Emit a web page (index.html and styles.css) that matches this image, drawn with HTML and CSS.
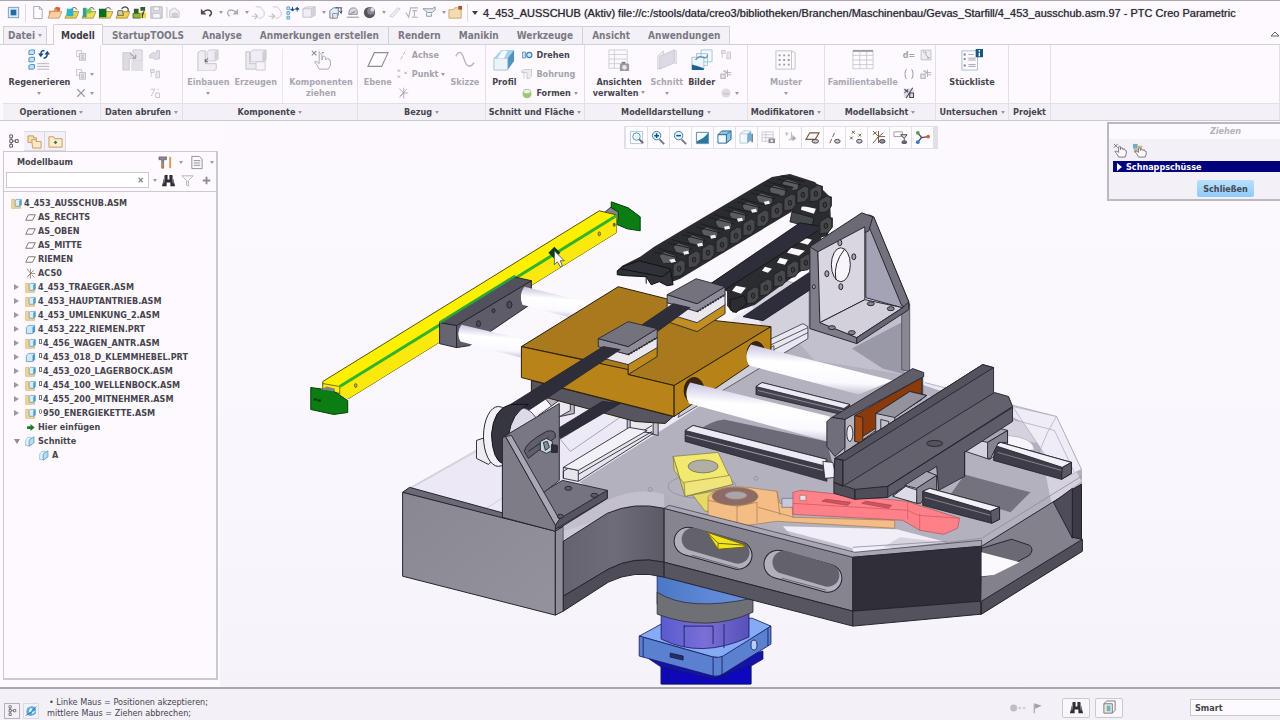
FILE: index.html
```
<!DOCTYPE html>
<html lang="de">

<head>
    <meta charset="UTF-8">
    <meta name="viewport" content="width=device-width, initial-scale=1.0">
    <title>4_453_AUSSCHUB (Aktiv) - PTC Creo Parametric</title>
    <link rel="stylesheet" href="styles.css">
</head>

<body>
    <!-- icon set -->
    <svg class="defs" aria-hidden="true">
        <symbol id="i-app" viewBox="0 0 16 16"><rect x="2.500" y="2.500" width="11" height="11" fill="#dfeaf4" stroke="#7da0bd" /><rect x="5" y="5" width="6" height="6" fill="#1d6ea8" /></symbol>
        <symbol id="i-new" viewBox="0 0 16 16"><path d="M4 1.500h6l3 3v10H4z" fill="#fdfcff" stroke="#aaa7b2" /><path d="M10 1.500v3h3" fill="none" stroke="#aaa7b2" /></symbol>
        <symbol id="i-open" viewBox="0 0 16 16"><path d="M2 6h5l1-2h5v9H2z" fill="#e0a066" /><path d="M1 14l3-7h12l-3 7z" fill="#f7d0a4" stroke="#b98657" stroke-width=".7" /><path d="M7 5q3-5 6-2l1-1v4h-4l1-1q-2-2-4 0z" fill="#e25c3f" /></symbol>
        <symbol id="i-open1" viewBox="0 0 16 16"><path d="M1 14l3-7h12l-3 7z" fill="#f3cf4d" stroke="#8f8a50" stroke-width=".8" /><path d="M3 4h7v8H3z" fill="#25b6c9" /><path d="M8 4q4-3 6 1" fill="none" stroke="#555" /></symbol>
        <symbol id="i-open2" viewBox="0 0 16 16"><path d="M1 14l3-7h12l-3 7z" fill="#f3df4d" stroke="#8f8a50" stroke-width=".8" /><path d="M2 3h4v10H2z" fill="#3f9a8f" /><path d="M6 4h5v5H6z" fill="#6ccf60" /><path d="M9 4q3-3 5 1" fill="none" stroke="#555" /></symbol>
        <symbol id="i-open3" viewBox="0 0 16 16"><path d="M1 14l3-7h12l-3 7z" fill="#f3d74d" stroke="#8f8a50" stroke-width=".8" /><path d="M1 4h8v9H1z" fill="#0f6b1f" /><path d="M8 4q4-3 6 1" fill="none" stroke="#555" /></symbol>
        <symbol id="i-open4" viewBox="0 0 16 16"><path d="M1 14l3-7h12l-3 7z" fill="#f3cf4d" stroke="#8f8a50" stroke-width=".8" /><path d="M3 6h5l1 5H3z" fill="#d8d0a0" stroke="#6d6844" /><path d="M7 4q4-4 7 0v3" fill="none" stroke="#444" stroke-width="1.300" /></symbol>
        <symbol id="i-open5" viewBox="0 0 16 16"><path d="M2 4h5v5H2zM9 2h5v4H9z" fill="#2f5f22" /><path d="M1 9h8v5H1z" fill="#8dbb2a" stroke="#444" stroke-width=".7" /><path d="M9 8h6v6H9z" fill="#f0d836" /><path d="M11 8v6M13 6l-2 6" stroke="#333" /></symbol>
        <symbol id="i-save" viewBox="0 0 16 16"><path d="M2 2h12v12H2z" fill="#dcd9e3" stroke="#b5b2bd" /><path d="M5 2h6v4H5zM4 9h8v5H4z" fill="#f6f4fa" stroke="#b5b2bd" stroke-width=".7" /></symbol>
        <symbol id="i-prn" viewBox="0 0 16 16"><path d="M1 2v12M4 6l5-3 5 4v6H4z" fill="#efedf4" stroke="#c5c2cc" /><path d="M7 9h5v4H7z" fill="#d4d1db" stroke="#bbb8c2" stroke-width=".7" /></symbol>
        <symbol id="i-undo" viewBox="0 0 16 16"><path d="M4 8q4-4 8-2 3 3-1 6" fill="none" stroke="#4f4d57" stroke-width="1.700" /><path d="M2 4v6h6z" fill="#4f4d57" /></symbol>
        <symbol id="i-redo" viewBox="0 0 16 16"><path d="M12 8q-4-4-8-2-3 3 1 6" fill="none" stroke="#aeabb6" stroke-width="1.500" /><path d="M14 4v6H8z" fill="#aeabb6" /></symbol>
        <symbol id="i-pg" viewBox="0 0 16 16"><path d="M5 2h5l4 5v4l-3 3H8" fill="#faf8fd" stroke="#cbc8d2" /><path d="M1 12h6M4 9l3 3-3 3" fill="none" stroke="#c2bfca" stroke-width="1.300" /></symbol>
        <symbol id="i-regen" viewBox="0 0 16 16"><path d="M2 2h3v3H2zM2 7h3v3H2zM2 12h3v3H2z" fill="#bfe0f3" stroke="#4f94c4" stroke-width=".8" /><path d="M8 2v4M6 4.500l2 2 2-2zM13 3v4M11 4.500l2-2 2 2z" fill="#1c4f8a" stroke="#1c4f8a" /></symbol>
        <symbol id="i-box" viewBox="0 0 16 16"><path d="M1 4h9v9H1zM1 4l4-2h9v9l-4 2M10 4l4-2" fill="#f0eef5" stroke="#c2bfca" /><path d="M10 4l4-2v9l-4 2z" fill="#d4d1db" /></symbol>
        <symbol id="i-win" viewBox="0 0 16 16"><path d="M2 6l4-3h5v8l-4 3H2z" fill="#dff0fa" stroke="#65869f" /><path d="M5 9h5v5H5z" fill="#e8e6ee" stroke="#8f8c98" /><path d="M8 3h7M14 3v5M12 6l2 3 1-3" fill="none" stroke="#4a4852" /></symbol>
        <symbol id="i-pen" viewBox="0 0 16 16"><path d="M4 10q0-7 5-7t4 7zM2 13h13" fill="#dad7e1" stroke="#8f8c98" /><path d="M6 9l5-2" stroke="#777480" /></symbol>
        <symbol id="i-ball" viewBox="0 0 16 16"><circle cx="8" cy="8" r="6" fill="#55535d" /><circle cx="9.500" cy="6.500" r="4" fill="#8b8994" /><circle cx="11" cy="5" r="2" fill="#dddbe4" /></symbol>
        <symbol id="i-bar" viewBox="0 0 16 16"><path d="M2 12L10 3l3 1-8 9z" fill="#efedf3" stroke="#d0cdd6" /></symbol>
        <symbol id="i-root" viewBox="0 0 16 16"><path d="M1 8l3 5 2-10h8M8 6h5M10 6v7M7 13h7" fill="none" stroke="#b6b3bd" stroke-width="1.200" /></symbol>
        <symbol id="i-eyes" viewBox="0 0 16 16"><path d="M1 4h10l3-2v3l-3 3H6z" fill="#dfe9f0" stroke="#8199a8" /><path d="M5 8v4h5V9" fill="none" stroke="#8199a8" /></symbol>
        <symbol id="i-fold" viewBox="0 0 16 16"><path d="M1 5h5l1-2h7v11H1z" fill="#f3dcae" stroke="#c6a978" /><path d="M11 1h4v4h-4z" fill="#b34f35" /></symbol>
        <symbol id="i-copy" viewBox="0 0 16 16"><path d="M2 2h7v8H2z" fill="#f7f5fa" stroke="#c2bfca" /><path d="M6 6h8v9H6zM8 9h4M8 11h4M8 13h4" fill="#e7e4ed" stroke="#b5b2bd" /></symbol>
        <symbol id="i-x" viewBox="0 0 16 16"><path d="M3 3l10 10M13 3L3 13" stroke="#9b98a3" stroke-width="1.600" /></symbol>
        <symbol id="i-shape" viewBox="0 0 16 16"><path d="M1 8l5-4 3 3 1-5h4v11l-5 1-4-2H1z" fill="#e0dde6" stroke="#c2bfca" /></symbol>
        <symbol id="i-tree2" viewBox="0 0 16 16"><path d="M2 2h5v4H2zM3 6v6M10 4h4v9h-5v-4z" fill="#e9e6ee" stroke="#c2bfca" /></symbol>
        <symbol id="i-line" viewBox="0 0 16 16"><path d="M2 3h6M8 2L3 12M9 8h5v6H9zM11 3h2" fill="none" stroke="#c2bfca" stroke-width="1.200" /></symbol>
        <symbol id="i-axis" viewBox="0 0 16 16"><path d="M5 14L12 1" stroke="#aba8b3" stroke-dasharray="5 2" /></symbol>
        <symbol id="i-point" viewBox="0 0 16 16"><path d="M1 2l3 3M4 2L1 5M10 5l3 3M13 5l-3 3M1 10l3 3M4 10l-3 3" stroke="#9c99a4" /></symbol>
        <symbol id="i-csys" viewBox="0 0 16 16"><path d="M3 2l6 6-6 6M9 1v14M9 8h6M13 3L4 12" fill="none" stroke="#9c99a4" /></symbol>
        <symbol id="i-rev" viewBox="0 0 16 16"><path d="M2 4h4v8H2z" fill="#bedff2" stroke="#5d8fb0" /><circle cx="11" cy="8" r="3.500" fill="#cfeaf8" stroke="#3c83b5" stroke-width="1.500" /></symbol>
        <symbol id="i-hole" viewBox="0 0 16 16"><path d="M1 4l4-2h9v9l-3 3H8V6H1zM4 6v8" fill="#edebf2" stroke="#c2bfca" /></symbol>
        <symbol id="i-form" viewBox="0 0 16 16"><circle cx="8" cy="9" r="6" fill="#9fc873" /><ellipse cx="8" cy="6" rx="5" ry="3" fill="#eef6e2" stroke="#a9b89b" /></symbol>
        <symbol id="i-brace" viewBox="0 0 16 16"><path d="M5 2q-2 0-2 3t-1 3q1 0 1 3t2 3M11 2q2 0 2 3t1 3q-1 0-1 3t-2 3" fill="none" stroke="#8f8c98" stroke-width="1.200" /></symbol>
        <symbol id="i-pct" viewBox="0 0 16 16"><path d="M1 2h13v12H1z" fill="#dedbe4" /><path d="M2 3l5 4M7 3L2 8M13 1L4 15M9 8v6h5V8z" fill="none" stroke="#4a4852" stroke-width="1.400" /></symbol>
        <symbol id="i-chart" viewBox="0 0 16 16"><path d="M1.500 1.500h13v13h-13z" fill="#edebf1" stroke="#b5b2bd" /><path d="M4 4h4v3M7 7l5 5M9 12h4" fill="none" stroke="#9c99a4" /></symbol>
        <symbol id="i-parts" viewBox="0 0 16 16"><path d="M1 8h6v6H1zM4 4h4v4M10 2v10M8 6h7M10 9h5" fill="#e3e0e9" stroke="#a5a2ad" /></symbol>
        <symbol id="i-grey" viewBox="0 0 16 16"><circle cx="8" cy="8" r="6" fill="#dddae3" /><path d="M4 9h8" stroke="#bbb8c2" /></symbol>
        <symbol id="i-zfit" viewBox="0 0 16 16"><path d="M1.500 1.500h13v13h-13z" fill="none" stroke="#a9c6da" /><circle cx="8" cy="7" r="4" fill="#eaf5fb" stroke="#5c8fb4" /><path d="M11 10l4 4" stroke="#666470" stroke-width="2" /></symbol>
        <symbol id="i-zin" viewBox="0 0 16 16"><circle cx="6" cy="6" r="4.500" fill="#e1f2fb" stroke="#3577a8" /><path d="M3.500 6h5M6 3.500v5" stroke="#174e86" stroke-width="1.600" /><path d="M9 10l5 5" stroke="#77747f" stroke-width="2" /></symbol>
        <symbol id="i-zout" viewBox="0 0 16 16"><circle cx="6" cy="6" r="4.500" fill="#e1f2fb" stroke="#3577a8" /><path d="M3.500 6h5" stroke="#174e86" stroke-width="1.600" /><path d="M9 10l5 5" stroke="#77747f" stroke-width="2" /></symbol>
        <symbol id="i-shade" viewBox="0 0 16 16"><path d="M1.500 2.500h13v12h-13z" fill="#2b77a4" /><path d="M2 3h12Q10 9 2 12z" fill="#f2fafd" /><path d="M1.500 2.500h13v12h-13z" fill="none" stroke="#6e93ab" /></symbol>
        <symbol id="i-cube" viewBox="0 0 16 16"><path d="M1 5l4-4h10v9l-5 4V5z" fill="#8cc5e4" stroke="#2e6790" /><path d="M1 5h9v9H1z" fill="#f3fafd" stroke="#2e6790" /><path d="M10 5l5-4" stroke="#2e6790" /></symbol>
        <symbol id="i-views" viewBox="0 0 16 16"><path d="M1 4l4-3h8M1 4h8v10H1z" fill="#f3f9fc" stroke="#b3ccda" /><path d="M9 4l4-3v10l-4 3z" fill="#6fb0d6" /><path d="M14 4v9" stroke="#666" stroke-width="1.500" /></symbol>
        <symbol id="i-cam" viewBox="0 0 16 16"><path d="M1 2h12v10H1zM1 5h12M1 8h12M5 2v10" fill="#fbf9fd" stroke="#d0cdd6" /><path d="M8 9h7v5H8z" fill="#8f8c98" /><circle cx="11.500" cy="11.500" r="1.500" fill="#e7e4ed" /></symbol>
        <symbol id="i-spin" viewBox="0 0 16 16"><path d="M4 2v4M2 4h4M9 2v9M6 11l3-2 5 0" fill="none" stroke="#c2bfca" stroke-width="1.200" /><path d="M10 5l4 4-4 3z" fill="#aaa7b2" /></symbol>
        <symbol id="i-pdisp" viewBox="0 0 16 16"><path d="M5 3h10l-4 7H1z" fill="#fdfbff" stroke="#79573d" stroke-width="1.200" /><ellipse cx="11" cy="12" rx="3.500" ry="2" fill="#c9c6d0" stroke="#46444e" /></symbol>
        <symbol id="i-adisp" viewBox="0 0 16 16"><path d="M3 14L9 1" stroke="#79573d" stroke-dasharray="5 2" /><ellipse cx="11" cy="12" rx="3" ry="2" fill="#c9c6d0" stroke="#46444e" /></symbol>
        <symbol id="i-ptdisp" viewBox="0 0 16 16"><path d="M3 1l3 3M6 1L3 4M1 7l3 3M4 7l-3 3M10 4l3 3M13 4l-3 3" stroke="#79573d" /><ellipse cx="11" cy="12" rx="3" ry="2" fill="#c9c6d0" stroke="#46444e" /></symbol>
        <symbol id="i-cdisp" viewBox="0 0 16 16"><path d="M2 1l6 6-6 7M8 1v13M8 7h7M13 3L6 9M2 5l4-3" fill="none" stroke="#79573d" /><ellipse cx="12" cy="12" rx="3" ry="2" fill="#8f8c98" stroke="#46444e" /></symbol>
        <symbol id="i-ann" viewBox="0 0 16 16"><path d="M1 2h9v5H1z" fill="#fff" stroke="#b39290" /><path d="M8 5h7l-3 4zM12 9v3" fill="#d9d6df" stroke="#46444e" /><ellipse cx="12" cy="13" rx="3" ry="2" fill="#66646e" /></symbol>
        <symbol id="i-rgb" viewBox="0 0 16 16"><path d="M3 3l4 5 7-1M7 8l-4 5" fill="none" stroke="#4a4852" stroke-width="1.300" /><circle cx="3" cy="3" r="2" fill="#4b9a5c" /><circle cx="14" cy="7" r="2" fill="#d45a50" /><circle cx="3" cy="13" r="2" fill="#3c79c2" /></symbol>
        <symbol id="i-hand" viewBox="0 0 16 16"><path d="M1 1l4 4M5 1L1 5" stroke="#77747f" /><path d="M6 15q-2-4-4-6 2-1 4 1V4q1.500-1 2 0v3l1-2q1.500 0 1.500 2l1.500-1 1 2 1 0q1 2-1 7z" fill="#faf8fc" stroke="#77747f" /></symbol>
        <symbol id="i-hand2" viewBox="0 0 16 16"><path d="M1 1h5v5H1z" fill="#6fa9d4" /><path d="M6 3h5v4H6zM2 6h4v4H2z" fill="#d6b077" /><path d="M7 15q-2-4-4-6 2-1 4 1V6q1.500-1 2 0v2l1-1q1.500 0 1.500 1l1.500-1 1 2 1 0q1 2-1 6z" fill="#faf8fc" stroke="#77747f" /></symbol>
        <symbol id="i-mtree" viewBox="0 0 16 16"><path d="M4 1h3v3H4zM4 6h3v3H4zM4 11h3v3H4zM5.500 4v2M5.500 9v2M7 7.500h3M10 6h3v3h-3z" fill="#fff" stroke="#5a5862" /></symbol>
        <symbol id="i-folders" viewBox="0 0 16 16"><path d="M1 2h6v2h3v5H1z" fill="#f5dfae" stroke="#c79a5d" /><path d="M5 6h4l1 2h5v7H6z" fill="#fbeac4" stroke="#c79a5d" /></symbol>
        <symbol id="i-fav" viewBox="0 0 16 16"><path d="M1 3h5l1 2h8v9H1z" fill="#fbeccb" stroke="#c79a5d" /><path d="M8 7l2 2-2 2-2-2z" fill="#3e7a55" /></symbol>
        <symbol id="i-tools" viewBox="0 0 16 16"><path d="M1 2h8v3H6v9H4V5H1z" fill="#8f8c98" stroke="#55535d" stroke-width=".7" /><path d="M4 8h2v6H4z" fill="#c28648" /><path d="M12 2h2v12h-2z" fill="#d99a51" /></symbol>
        <symbol id="i-doc" viewBox="0 0 16 16"><path d="M3 1.500h8l3 3v10H3zM5 6h7M5 8.500h7M5 11h7" fill="#fbf9fd" stroke="#8f8c98" /></symbol>
        <symbol id="i-bino" viewBox="0 0 16 16"><path d="M4 2h3v5h2V2h3l3 12h-5v-4H6v4H1z" fill="#2e2c35" /><path d="M4 4l-1 7M12 4l1 7" stroke="#98959f" /></symbol>
        <symbol id="i-funnel" viewBox="0 0 16 16"><path d="M2 3h12L9 8v6l-2-1V8z" fill="#fbf9fd" stroke="#b5b2bd" /></symbol>
        <symbol id="i-plus" viewBox="0 0 16 16"><path d="M8 4v8M4 8h8" stroke="#8f8c98" stroke-width="2" /></symbol>
        <symbol id="i-asm" viewBox="0 0 16 16"><path d="M1 2h5v8h8v5H1z" fill="#f6d493" stroke="#c9a363" stroke-width=".8" /><path d="M6 4l2-2h7v8l-2 2H6z" fill="#d5effb" stroke="#4b8bb5" stroke-width=".9" /><path d="M12 4l3-2v8l-3 2z" fill="#4c9dce" /></symbol>
        <symbol id="i-prt" viewBox="0 0 16 16"><path d="M2 5l3-3h9v9l-3 3H2z" fill="#cdeafa" stroke="#4b8bb5" /><path d="M11 5l3-3v9l-3 3z" fill="#3f92c6" /></symbol>
        <symbol id="i-plane" viewBox="0 0 16 16"><path d="M5 4h10l-4 8H1z" fill="#fefcff" stroke="#6b625f" stroke-width="1.200" /></symbol>
        <symbol id="i-acs" viewBox="0 0 16 16"><path d="M3 1l5 7-5 6M8 1v14M8 8h7M13 3L4 12M10 10l4 4" fill="none" stroke="#86684f" /></symbol>
        <symbol id="i-ins" viewBox="0 0 16 16"><path d="M3 6h5V3l6 5-6 5v-3H3z" fill="#1f7a28" /></symbol>
        <symbol id="i-sec" viewBox="0 0 16 16"><path d="M1 6l3-4h5v8l-3 4H1z" fill="#e4f2f9" stroke="#8bb3cc" /><path d="M6 6l7-5v9l-7 5z" fill="#b4dcf2" stroke="#4b8bb5" /></symbol>
        <symbol id="i-globe" viewBox="0 0 16 16"><path d="M3 4q6-4 10-1l2 3q-2 2 0 5-5 5-10 3-5-2-2-10z" fill="#5fa9dc" /><path d="M6 5q2-2 4 0l-2 4-3 1zM9 9l4-1q0 3-3 4z" fill="#d7effb" /><path d="M1 14Q9 11 15 2" fill="none" stroke="#235f94" /></symbol>
        <symbol id="i-flag" viewBox="0 0 16 16"><path d="M3 2v13" stroke="#a5a2ad" stroke-width="1.500" /><path d="M4 2l9 3-9 4z" fill="#a5a2ad" /></symbol>
        <symbol id="i-dots" viewBox="0 0 20 16"><circle cx="5" cy="8" r="4" fill="#c0bdc8" /><circle cx="12" cy="8" r="1.500" fill="#d0cdd6" /><circle cx="17" cy="8" r="1.500" fill="#d0cdd6" /></symbol>
        <symbol id="i-sel" viewBox="0 0 16 16"><path d="M2 4h9v10H2z" fill="#eee9d2" stroke="#777480" /><path d="M2 4l3-3h9v10l-3 3" fill="none" stroke="#777480" /><path d="M5 6h4v6H5z" fill="#6cb1d8" /></symbol>
        <!-- large ribbon icons -->
        <symbol id="b-regen" viewBox="0 0 24 24"><path d="M1 2l2-1h4v4l-1 1H1zM1 10l2-1h4v4l-1 1H1zM1 18l2-1h4v4l-1 1H1z" fill="#bfe2f4" stroke="#3f8abb" /><path d="M10 16h13M10 19h13M10 22h13" stroke="#b0adb8" /><path d="M18 2q-4-1-4 4M17 10q4 0 4-5" fill="none" stroke="#1c4f7d" stroke-width="1.600" /><path d="M11 5h6l-3 4zM18 6h6l-3-4z" fill="#1c4f7d" /></symbol>
        <symbol id="b-get" viewBox="0 0 24 24"><path d="M1 4h9v7H8v12H1z" fill="#dddae3" stroke="#cbc8d2" /><path d="M12 1h10v12H12z" fill="#e7e4ed" stroke="#cbc8d2" /><path d="M10 13h13v11H10z" fill="#e2dfe9" /><path d="M9 5l6 5M15 6v4h-4" fill="none" stroke="#8f8c98" /></symbol>
        <symbol id="b-asm" viewBox="0 0 24 24"><path d="M1 4l3-2h5v14h12v6l-3 2H1z" fill="#f0eef4" stroke="#c2bfca" /><path d="M11 3l3-2h9v10l-3 2h-9z" fill="#efedf3" stroke="#cbc8d2" /><path d="M19 3l4-2v10l-4 2z" fill="#d4d1db" /><path d="M12 10l-3 4M9 11v3h3" fill="none" stroke="#55535d" /></symbol>
        <symbol id="b-create" viewBox="0 0 24 24"><path d="M1 3h4v13h12v6H1z" fill="#eceaf1" stroke="#c2bfca" /><path d="M6 3l3-2h14v10l-3 3H6z" fill="#efedf3" stroke="#cbc8d2" /><path d="M19 3l4-2v12l-4 1z" fill="#d0cdd6" /><path d="M12 14h10v9H12z" fill="#f6f4f9" stroke="#cbc8d2" /></symbol>
        <symbol id="b-hand" viewBox="0 0 24 24"><path d="M2 2l5 5M7 2L2 7M10 3v2M13 4h2" stroke="#8f8c98" stroke-width="1.200" /><path d="M10 22q-2-5-5-8 2-2 5 2V6q2-2 3 0v6l1-4q2-1 3 1v3l2-2q2 0 2 2l1 0q2 6-2 10z" fill="#faf8fc" stroke="#a8a5b0" /></symbol>
        <symbol id="b-plane" viewBox="0 0 24 24"><path d="M8 4h15l-7 15H1z" fill="#fefcff" stroke="#8f8c98" stroke-width="1.200" /></symbol>
        <symbol id="b-sketch" viewBox="0 0 24 24"><path d="M2 8q5-10 9 3t11 4" fill="none" stroke="#b5b2bd" stroke-width="1.500" /></symbol>
        <symbol id="b-prof" viewBox="0 0 24 24"><path d="M1 10L9 1h14l-7 9z" fill="#a4d3ec" /><path d="M23 1v12l-7 10V10z" fill="#4d94c2" /><path d="M1 10h15v13H1z" fill="#eaf4fa" stroke="#aebfcb" /><path d="M5 10l5-8h6l-4 8z" fill="#f5fbfe" /></symbol>
        <symbol id="b-views" viewBox="0 0 24 24"><path d="M1 1h20v20H1zM1 6h20M1 11h20M1 16h20M7 1v20" fill="#fbf9fd" stroke="#d0cdd6" /><path d="M13 16h10v8H13z" fill="#9c99a4" /><path d="M15 14h4v2h-4z" fill="#77747f" /><circle cx="18" cy="20" r="2.500" fill="#e7e4ed" /></symbol>
        <symbol id="b-cut" viewBox="0 0 24 24"><path d="M2 8l6-6v14l-6 6z" fill="#f5f3f8" stroke="#cbc8d2" /><path d="M4 8l16-7v14L4 22z" fill="#dddae3" stroke="#cbc8d2" /><path d="M20 1l2 1v14l-2-1z" fill="#f5f3f8" stroke="#cbc8d2" /></symbol>
        <symbol id="b-img" viewBox="0 0 24 24"><path d="M11 1h12v13H11zM6 5h12v13H6z" fill="#f3f8fb" stroke="#a2c4da" /><path d="M1 9h13v13H1z" fill="#eef6fb" stroke="#a2c4da" /><path d="M1 17q5 1 13 4v2H1z" fill="#1f5f92" /><path d="M5 12q3-5 8-3t5-3" fill="none" stroke="#6d98b4" stroke-width="1.500" /></symbol>
        <symbol id="b-pat" viewBox="0 0 24 24"><path d="M1 2h17v20H1zM18 2l4 2v18h-4" fill="#fbf9fd" stroke="#c2bfca" /><path d="M4 6h2v2H4zM9 6h2v2H9zM14 6h2v2h-2zM4 11h2v2H4zM9 11h2v2H9zM14 11h2v2h-2zM4 16h2v2H4zM9 16h2v2H9zM14 16h2v2h-2z" fill="#9c99a4" /></symbol>
        <symbol id="b-fam" viewBox="0 0 24 24"><path d="M1 2.500h22v19H1zM1 7h22M1 12h22M1 17h22M8.500 3v18M16 3v18" fill="#fdfbff" stroke="#cbc8d2" /><path d="M1 2h22" stroke="#9c99a4" stroke-width="2" /></symbol>
        <symbol id="b-bom" viewBox="0 0 24 24"><path d="M1 2h17v21H1z" fill="#fbf9fd" stroke="#a2c0d4" /><path d="M8 6h6M8 10h8M8 12h8M8 17h8M8 19h8" stroke="#a5a2ad" /><path d="M3 5h2v2H3zM3 10h2v2H3zM3 17h2v2H3z" fill="#77747f" /><path d="M16 0h8v9h-8z" fill="#16567f" /><path d="M20 1v2M20 4v4" stroke="#fff" stroke-width="1.500" /></symbol>
    </svg>

    <header class="titlebar">
        <svg class="ico"><use href="#i-app" /></svg>
        <span class="vsep"></span>
        <button class="qat" aria-label="Neu"><svg class="ico"><use href="#i-new" /></svg></button>
        <button class="qat" aria-label="Öffnen"><svg class="ico"><use href="#i-open" /></svg></button>
        <button class="qat" aria-label="Teil öffnen"><svg class="ico"><use href="#i-open1" /></svg></button>
        <button class="qat" aria-label="Baugruppe öffnen"><svg class="ico"><use href="#i-open2" /></svg></button>
        <button class="qat" aria-label="Zeichnung öffnen"><svg class="ico"><use href="#i-open3" /></svg></button>
        <button class="qat" aria-label="Bibliothek öffnen"><svg class="ico"><use href="#i-open4" /></svg></button>
        <button class="qat" aria-label="Normteil öffnen"><svg class="ico"><use href="#i-open5" /></svg></button>
        <button class="qat" aria-label="Speichern"><svg class="ico"><use href="#i-save" /></svg></button>
        <button class="qat" aria-label="Sichern"><svg class="ico"><use href="#i-prn" /></svg></button>
        <span class="qat-space"></span>
        <button class="qat" aria-label="Rückgängig"><svg class="ico"><use href="#i-undo" /></svg><i class="caret"></i></button>
        <button class="qat" aria-label="Wiederholen"><svg class="ico"><use href="#i-redo" /></svg><i class="caret"></i></button>
        <button class="qat" aria-label="Zurück"><svg class="ico"><use href="#i-pg" /></svg></button>
        <button class="qat" aria-label="Vor"><svg class="ico"><use href="#i-pg" /></svg></button>
        <button class="qat" aria-label="Regenerieren"><svg class="ico"><use href="#i-regen" /></svg></button>
        <button class="qat" aria-label="Fenster"><svg class="ico"><use href="#i-box" /></svg><i class="caret"></i></button>
        <button class="qat" aria-label="Aktivieren"><svg class="ico"><use href="#i-win" /></svg></button>
        <button class="qat" aria-label="Messen"><svg class="ico"><use href="#i-pen" /></svg></button>
        <button class="qat" aria-label="Farbeffekte"><svg class="ico"><use href="#i-ball" /></svg><i class="caret"></i></button>
        <button class="qat" aria-label="Lineal"><svg class="ico"><use href="#i-bar" /></svg></button>
        <button class="qat" aria-label="Parameter"><svg class="ico"><use href="#i-root" /></svg></button>
        <button class="qat" aria-label="Sichtbarkeit"><svg class="ico"><use href="#i-eyes" /></svg><i class="caret"></i></button>
        <button class="qat" aria-label="Arbeitsverzeichnis"><svg class="ico"><use href="#i-fold" /></svg></button>
        <span class="vsep"></span>
        <i class="caret dark"></i>
        <h1 class="title">4_453_AUSSCHUB (Aktiv) file://c:/stools/data/creo3/bibliotheken/Branchen/Maschinenbau/Gevas_Starfill/4_453_ausschub.asm.97 - PTC Creo Parametric</h1>
    </header>

    <nav class="tabs">
        <button class="tab file">Datei<i class="caret"></i></button>
        <a class="tab active" href="#modell">Modell</a>
        <a class="tab" href="#startup">StartupTOOLS</a>
        <a class="tab" href="#analyse">Analyse</a>
        <a class="tab" href="#anmerkungen">Anmerkungen erstellen</a>
        <a class="tab split" href="#rendern">Rendern</a>
        <a class="tab" href="#manikin">Manikin</a>
        <a class="tab" href="#werkzeuge">Werkzeuge</a>
        <a class="tab split" href="#ansicht">Ansicht</a>
        <a class="tab last" href="#anwendungen">Anwendungen</a>
        <button class="collapse" aria-label="Multifunktionsleiste minimieren"><svg class="up" viewBox="0 0 10 8"><path d="M1 6l4-4 4 4z" fill="#fff" stroke="#66646e" /></svg></button>
    </nav>

    <section class="ribbon">
        <div class="group g-op">
            <div class="tools">
                <button class="big on"><svg><use href="#b-regen" /></svg>Regenerieren<i class="caret"></i></button>
                <div class="stack">
                    <button class="small" aria-label="Kopieren"><svg><use href="#i-copy" /></svg></button>
                    <button class="small" aria-label="Einfügen"><svg><use href="#i-copy" /></svg><i class="caret"></i></button>
                    <button class="small" aria-label="Löschen"><svg><use href="#i-x" /></svg><i class="caret"></i></button>
                </div>
            </div>
            <button class="name">Operationen<i class="caret"></i></button>
        </div>
        <div class="group g-get">
            <div class="tools">
                <button class="big" aria-label="Daten abrufen"><svg><use href="#b-get" /></svg></button>
                <div class="stack">
                    <button class="small" aria-label="Importieren"><svg><use href="#i-shape" /></svg></button>
                    <button class="small" aria-label="Verschmelzen"><svg><use href="#i-tree2" /></svg></button>
                    <button class="small" aria-label="Schrumpfverpackung"><svg><use href="#i-line" /></svg></button>
                </div>
            </div>
            <button class="name">Daten abrufen<i class="caret"></i></button>
        </div>
        <div class="group g-comp">
            <div class="tools">
                <button class="big"><svg><use href="#b-asm" /></svg>Einbauen<i class="caret"></i></button>
                <button class="big"><svg><use href="#b-create" /></svg>Erzeugen</button>
                <button class="big lined"><svg><use href="#b-hand" /></svg>Komponenten<br>ziehen</button>
            </div>
            <button class="name">Komponente<i class="caret"></i></button>
        </div>
        <div class="group g-datum">
            <div class="tools">
                <button class="big"><svg><use href="#b-plane" /></svg>Ebene</button>
                <div class="stack">
                    <button class="small"><svg><use href="#i-axis" /></svg>Achse</button>
                    <button class="small"><svg><use href="#i-point" /></svg>Punkt<i class="caret"></i></button>
                    <button class="small" aria-label="Koordinatensystem"><svg><use href="#i-csys" /></svg></button>
                </div>
                <button class="big"><svg><use href="#b-sketch" /></svg>Skizze</button>
            </div>
            <button class="name">Bezug<i class="caret"></i></button>
        </div>
        <div class="group g-cut">
            <div class="tools">
                <button class="big on"><svg><use href="#b-prof" /></svg>Profil</button>
                <div class="stack">
                    <button class="small on"><svg><use href="#i-rev" /></svg>Drehen</button>
                    <button class="small"><svg><use href="#i-hole" /></svg>Bohrung</button>
                    <button class="small on"><svg><use href="#i-form" /></svg>Formen<i class="caret"></i></button>
                </div>
            </div>
            <button class="name">Schnitt und Fläche<i class="caret"></i></button>
        </div>
        <div class="group g-disp">
            <div class="tools">
                <button class="big on"><svg><use href="#b-views" /></svg><span>Ansichten<br>verwalten<i class="caret"></i></span></button>
                <button class="big"><svg><use href="#b-cut" /></svg>Schnitt<i class="caret"></i></button>
                <button class="big on"><svg><use href="#b-img" /></svg>Bilder</button>
                <div class="stack">
                    <button class="small" aria-label="Explosionsansicht"><svg><use href="#i-tree2" /></svg></button>
                    <button class="small" aria-label="Status umschalten"><svg><use href="#i-parts" /></svg></button>
                    <button class="small" aria-label="Darstellungsstil"><svg><use href="#i-grey" /></svg><i class="caret"></i></button>
                </div>
            </div>
            <button class="name">Modelldarstellung<i class="caret"></i></button>
        </div>
        <div class="group g-mod">
            <div class="tools">
                <button class="big"><svg><use href="#b-pat" /></svg>Muster<i class="caret"></i></button>
            </div>
            <button class="name">Modifikatoren<i class="caret"></i></button>
        </div>
        <div class="group g-int">
            <div class="tools">
                <button class="big"><svg><use href="#b-fam" /></svg>Familientabelle</button>
                <div class="stack">
                    <button class="small" aria-label="Beziehungen">d=</button>
                    <button class="small" aria-label="Parameter"><svg><use href="#i-brace" /></svg></button>
                    <button class="small" aria-label="Bemaßungen umschalten"><svg><use href="#i-pct" /></svg></button>
                </div>
                <div class="stack">
                    <button class="small" aria-label="Publizieren"><svg><use href="#i-chart" /></svg></button>
                    <button class="small" aria-label="Komponentenschnittstelle"><svg><use href="#i-parts" /></svg></button>
                </div>
            </div>
            <button class="name">Modellabsicht<i class="caret"></i></button>
        </div>
        <div class="group g-inv">
            <div class="tools">
                <button class="big on"><svg><use href="#b-bom" /></svg>Stückliste</button>
            </div>
            <button class="name">Untersuchen<i class="caret"></i></button>
        </div>
        <div class="group g-proj">
            <div class="tools"></div>
            <button class="name">Projekt</button>
        </div>
        <div class="group rest">
            <div class="tools"></div>
            <div class="name"></div>
        </div>
    </section>

    <main class="work">
        <aside class="side">
            <div class="side-tabs">
                <button class="side-tab open" aria-label="Modellbaum"><svg class="ico"><use href="#i-mtree" /></svg></button>
                <button class="side-tab" aria-label="Ordner-Browser"><svg class="ico"><use href="#i-folders" /></svg></button>
                <button class="side-tab" aria-label="Favoriten"><svg class="ico"><use href="#i-fav" /></svg></button>
            </div>
            <div class="panel">
                <div class="panel-head">
                    <h2>Modellbaum</h2>
                    <button aria-label="Einstellungen"><svg class="ico"><use href="#i-tools" /></svg><i class="caret"></i></button>
                    <button aria-label="Anzeigen"><svg class="ico"><use href="#i-doc" /></svg><i class="caret"></i></button>
                </div>
                <div class="search">
                    <div class="field">
                        <input type="text" aria-label="Im Modellbaum suchen">
                        <button aria-label="Leeren">×</button>
                    </div>
                    <i class="caret"></i>
                    <button aria-label="Suchen"><svg class="ico"><use href="#i-bino" /></svg></button>
                    <button aria-label="Filter"><svg class="ico"><use href="#i-funnel" /></svg></button>
                    <button aria-label="Hinzufügen"><svg class="ico"><use href="#i-plus" /></svg></button>
                </div>
                <ul class="tree">
                    <li class="root"><svg><use href="#i-asm" /></svg>4_453_AUSSCHUB.ASM</li>
                    <li><i class="tw"></i><svg><use href="#i-plane" /></svg>AS_RECHTS</li>
                    <li><i class="tw"></i><svg><use href="#i-plane" /></svg>AS_OBEN</li>
                    <li><i class="tw"></i><svg><use href="#i-plane" /></svg>AS_MITTE</li>
                    <li><i class="tw"></i><svg><use href="#i-plane" /></svg>RIEMEN</li>
                    <li><i class="tw"></i><svg><use href="#i-acs" /></svg>ACS0</li>
                    <li><i class="tw closed"></i><svg><use href="#i-asm" /></svg>4_453_TRAEGER.ASM</li>
                    <li><i class="tw closed"></i><svg><use href="#i-asm" /></svg>4_453_HAUPTANTRIEB.ASM</li>
                    <li><i class="tw closed"></i><svg><use href="#i-asm" /></svg>4_453_UMLENKUNG_2.ASM</li>
                    <li><i class="tw closed"></i><svg><use href="#i-prt" /></svg>4_453_222_RIEMEN.PRT</li>
                    <li><i class="tw closed"></i><svg><use href="#i-asm" /></svg><b class="mark"></b>4_456_WAGEN_ANTR.ASM</li>
                    <li><i class="tw closed"></i><svg><use href="#i-prt" /></svg><b class="mark"></b>4_453_018_D_KLEMMHEBEL.PRT</li>
                    <li><i class="tw closed"></i><svg><use href="#i-asm" /></svg><b class="mark"></b>4_453_020_LAGERBOCK.ASM</li>
                    <li><i class="tw closed"></i><svg><use href="#i-asm" /></svg><b class="mark"></b>4_454_100_WELLENBOCK.ASM</li>
                    <li><i class="tw closed"></i><svg><use href="#i-asm" /></svg><b class="mark"></b>4_455_200_MITNEHMER.ASM</li>
                    <li><i class="tw closed"></i><svg><use href="#i-asm" /></svg><b class="mark flex"></b>950_ENERGIEKETTE.ASM</li>
                    <li><i class="tw"></i><svg><use href="#i-ins" /></svg>Hier einfügen</li>
                    <li><i class="tw opened"></i><svg><use href="#i-sec" /></svg>Schnitte</li>
                    <li class="deep"><i class="tw"></i><svg><use href="#i-sec" /></svg>A</li>
                </ul>
            </div>
        </aside>

        <section class="view">
            <svg class="scene" viewBox="220 121 1060 567" role="img" aria-label="Baugruppe 4_453_AUSSCHUB">
                <defs>
                    <linearGradient id="bg" x1="0" y1="0" x2="0" y2="1">
                        <stop offset="0" stop-color="#fdf9ff" />
                        <stop offset=".55" stop-color="#faf6fd" />
                        <stop offset="1" stop-color="#f2eef7" />
                    </linearGradient>
                    <linearGradient id="rod" x1="0" y1="0" x2="-.15" y2="1">
                        <stop offset="0" stop-color="#c9c5e0" />
                        <stop offset=".3" stop-color="#ffffff" />
                        <stop offset=".65" stop-color="#fbf9ff" />
                        <stop offset="1" stop-color="#a9a5bd" />
                    </linearGradient>
                    <linearGradient id="wall" x1="0" y1="0" x2="1" y2="0">
                        <stop offset="0" stop-color="#64636f" />
                        <stop offset=".5" stop-color="#6d6c78" />
                        <stop offset="1" stop-color="#5b5a65" />
                    </linearGradient>
                    <linearGradient id="front" x1="0" y1="0" x2="1" y2="1">
                        <stop offset="0" stop-color="#898791" />
                        <stop offset="1" stop-color="#94929d" />
                    </linearGradient>
                    <linearGradient id="cyl" x1="0" y1="0" x2="1" y2="0">
                        <stop offset="0" stop-color="#4a78c4" />
                        <stop offset=".5" stop-color="#5d86d4" />
                        <stop offset="1" stop-color="#6a90e0" />
                    </linearGradient>
                    <linearGradient id="hub" x1="0" y1="0" x2="1" y2="0">
                        <stop offset="0" stop-color="#5a5bd0" />
                        <stop offset=".5" stop-color="#7a6fd6" />
                        <stop offset="1" stop-color="#5650b8" />
                    </linearGradient>
                    <g id="link">
                        <path d="M-7-3l8-6 7 2v9l-5 6-10 2z" fill="#2b2c30" />
                        <path d="M-5-3l8-5 4 2v9l-4 5-8 1z" fill="#46484c" stroke="#1d1d20" stroke-width=".8" />
                        <ellipse cx="1" cy="1" rx="1.800" ry="2.600" fill="#3a3c40" stroke="#17171a" stroke-width=".8" />
                    </g>
                    <g id="rung">
                        <path d="M-22-7l6-5 24 6-6 8z" fill="#2b2c30" />
                        <path d="M-17-4l5-4 12 4-1 7-12 1z" fill="#5a5c61" stroke="#1d1d20" stroke-width=".8" />
                        <path d="M-22-8L2-2M-18-11L6-5" stroke="#1d1d20" />
                    </g>
                </defs>
                <rect x="0" y="0" width="1500" height="900" fill="url(#bg)" />

                <!-- gearbox and motor under the base -->
                <g stroke="#12185a" stroke-width=".8" stroke-linejoin="round">
                    <path d="M649 660l12 8v17h90v-18l12-7v-8l-50 14-64-14z" fill="#1412a8" />
                    <path d="M661 668l52 12 38-14v19h-90z" fill="#0d08c0" />
                    <path d="M668 671v14M676 672v13M700 678v7M726 677v8" />
                    <path d="M639 637l22-12 91-6 19 8-45 30q-6 3-13 1z" fill="#86aaf3" />
                    <path d="M639 637l74 21q6 1 10-1l48-30v18l-48 30q-5 3-10 2l-74-20z" fill="#5a80cf" />
                    <path d="M643 639v19M713 658v19M722 658v18M768 629v18" fill="none" />
                    <path d="M661 612v28q40 20 88-2v-28z" fill="url(#hub)" />
                    <path d="M684 626v22M684 627h29v18M724 625v24" fill="none" />
                    <path d="M657 575v30q40 15 96-4v-10z" fill="url(#cyl)" />
                    <path d="M657 593q30 20 96 6v14q-45 21-96 2z" fill="#6f7075" stroke="#2d2d33" />
                    <path d="M670 654l13 3v4l-13-3z" fill="#25305c" />
                    <ellipse cx="754" cy="646" rx="3" ry="5" fill="#b7cdfb" />
                </g>

                <!-- base: transparent cover -->
                <g stroke-linejoin="round">
                    <path d="M403 492L500 437 560 400 680 360 785 280 905 305 910 380 925 383 1057 417 1082 470V486L982 548 853 558 664 509 636 494 607 502 555 532z" fill="#ece8f6" />
                    <path d="M403 492L500 437M410 489L560 405M477 515L560 460" fill="none" stroke="#c4c0d0" stroke-width=".7" />
                    <path d="M563 532l-2-12 46-22-28-15 74-47 32-20 86-56 20-36 20-28 90 10 9 75 90 30 40 20 42 40v30l-100 62-129 11-189-49-28-15-29 8z" fill="#b3b1be" />
                    <path d="M783 282l29 8v40l98-20v66l-95-15-32-35z" fill="#c6c4d0" opacity=".8" />
                    <path d="M747 296l36-15 26 5v40l-37 22" fill="#d3d1dc" stroke="#9895a3" stroke-width=".7" />
                    <path d="M852 349l53-28 0 54-22-6z" fill="#9a99a8" />
                    <path d="M902 308l8-4v68l-8-2z" fill="#8a8894" stroke="#4b4954" stroke-width=".8" />
                    <path d="M925 383l132 34 25 53v14" fill="none" stroke="#9b98a6" stroke-width=".7" />
                    <path d="M923 395l90 25 42 10 27 52-30 22-12-60-30-6z" fill="#dddae5" opacity=".8" />
                    <path d="M1013 407l44 10 25 53-20 10z" fill="#efecf6" stroke="#aaa7b5" stroke-width=".7" />
                    <path d="M1013 420l42 11 20 42M1048 433l-16 38M1048 433l9-16" fill="none" stroke="#aaa7b5" stroke-width=".7" />
                    <path d="M700 430q10-8 24-10l103 22 8 32-12 2-120-36z" fill="#6b6a76" />
                    <path d="M965 475l66 18-20 20-60-18z" fill="#73727d" />
                    <path d="M1008 436q25 2 27 14l-20 4-12-12z" fill="#f7f4fb" stroke="#a3a0ae" stroke-width=".6" />
                    <path d="M783 527l114 3 50 13-94 11-60-15z" fill="#f1eef8" />
                    <path d="M884 548l16-10 36 4 11 2-40 6z" fill="#d6d3de" />
                    <path d="M853 548l94-6M853 555l129-16 100-62" fill="none" stroke="#8f8c9a" stroke-width=".8" />
                    <path d="M770 527l83 22 0 8-189-49v-12z" fill="#b0aebb" opacity=".7" />
                    <circle cx="756" cy="479" r="2" fill="none" stroke="#8f8c9a" stroke-width=".7" />
                    <circle cx="650" cy="490" r="2" fill="none" stroke="#8f8c9a" stroke-width=".7" />
                </g>

                <!-- swing arm below the cover -->
                <g stroke="#a07a52" stroke-width=".7" stroke-linejoin="round">
                    <ellipse cx="702" cy="487" rx="34" ry="12" fill="none" stroke="#8e8b99" />
                    <path d="M673 457l45-4 15 32-48 12z" fill="#f2e96f" stroke="#7f7a3a" />
                    <path d="M673 457l1 14 31 41 15-1-2-20-33 6z" fill="#e6d964" stroke="#7f7a3a" />
                    <path d="M733 485l-48 12-1-14 46-7z" fill="#f0e57b" stroke="#7f7a3a" />
                    <ellipse cx="703" cy="467" rx="15" ry="6.500" fill="#b1afa5" stroke="#666347" />
                    <path d="M708 497q10-12 40-9l29 4 3 12 12 2 1 12 102 3v8l-118-7-37 5-32-8z" fill="#f4bd86" />
                    <path d="M708 501l29 6 20-4M757 503v20M777 492l3 24M737 507v18M758 508l36 10" fill="none" />
                    <ellipse cx="735" cy="497" rx="23" ry="9" fill="#8c6a66" />
                    <ellipse cx="736" cy="496" rx="11" ry="4" fill="#aaa4ae" />
                    <path d="M782 499h14v9h-14z" fill="#c9c8d8" stroke="#6b6a88" />
                    <path d="M793 493l8-2 106 11 53 17-2 10-14 6-24-4-17-10-110-6z" fill="#ff8089" stroke="#b65059" />
                    <path d="M793 504l115 7 10 5 42 3M908 502v18M920 514v17" fill="none" stroke="#c65862" />
                    <path d="M822 502l4-2 25 3-3 3zM862 504l4-2 26 4-3 3z" fill="#d2525d" stroke="#a5444e" />
                    <path d="M800 496h6v5h-6z" fill="#ecdfe8" />
                </g>

                <!-- base: solid walls -->
                <g stroke="#26252c" stroke-width="1" stroke-linejoin="round">
                    <path d="M402 493l7-5 146 40 8-1v15l-8-9z" fill="#6a6974" />
                    <path d="M402 493l153 39v84L402 577z" fill="url(#front)" />
                    <path d="M555 532l8-5v85l-8 4z" fill="#8f8d98" />
                    <path d="M563 527l44-26q30-14 57-6v14q-27-6-57 5l-44 28z" fill="#c5c2cf" stroke="none" opacity=".85" />
                    <path d="M563 542l44-28q27-12 57-5v54q-30-7-56 7l-45 27z" fill="url(#wall)" />
                    <path d="M563 597l45-27q26-14 56-7v15q-30-8-56 5l-45 29z" fill="#4e4d57" />
                    <path d="M664 509l189 49v54l-189-49z" fill="#86848f" />
                    <path d="M664 509l5-3 186 47 127-12v6l-129 11z" fill="#a9a7b3" stroke-width=".6" />
                    <path d="M664 563l189 49v15l-189-49z" fill="#565560" />
                    <path d="M853 558l129-11v55l-129 10z" fill="#302e39" />
                    <path d="M853 612l129-10v13l-129 12z" fill="#53525d" />
                    <path d="M982 547l100-62v67l-101 63z" fill="#83818c" />
                    <path d="M1054 503l19-14v50z" fill="#4e4c58" />
                    <path d="M1073 490l9-5v55l-9-2z" fill="#3b3a45" />
                    <path d="M982 602l101-62v12l-101 63z" fill="#4f4e59" />
                    <path d="M982 549l30-9 18 6q5 4 0 10l-37 20-11 1z" fill="#6a6974" />
                    <path d="M982 553l38 10-26 13-12 1z" fill="#fbf8fe" stroke="none" />
                </g>
                <g fill="none" stroke-linecap="round">
                    <path d="M688 542l50 14M778 565l50 14" stroke="#25242b" stroke-width="29" />
                    <path d="M688 542l50 14M778 565l50 14" stroke="#b2b0bb" stroke-width="27" />
                    <path d="M693 540l45 13M784 563l44 13" stroke="#62616c" stroke-width="23" />
                    <path d="M692 556l46 13M782 579l44 12" stroke="#55535e" stroke-width=".8" />
                </g>
                <path d="M707 533l39 13-3 2-25 2z" fill="#f3e51d" stroke="#6e680e" />
                <path d="M707 533l11 11v6M718 544l27 2" fill="none" stroke="#6e680e" />

                <!-- left rails and carriages -->
                <g stroke="#2a2932" stroke-width=".9" stroke-linejoin="round">
                    <path d="M544 398l16-6 14 4v18l-14 3z" fill="#b8b6c2" />
                    <path d="M538 416l22-16 10 3v8l-30 17z" fill="#ebe8f2" />
                    <path d="M560 440l60-38 20 2-70 48z" fill="#eceaf3" stroke="#a09dab" />
                    <path d="M627 412l31 6v18l-31-7z" fill="#c3c1cc" />
                    <path d="M630 417l23 5v12l-23-4z" fill="#e8e6ee" />
                    <path d="M563 472l66-42 24 4-75 48-15-3z" fill="#e6e4ed" />
                    <path d="M578 470l74-44M578 475l74-43M563 468l15 3v11M563 468v11" fill="none" />
                    <path d="M563 468l66-40 18 3-69 40z" fill="#f3f1f8" />
                </g>

                <!-- energy chain, back run -->
                <path d="M710 284l90-60 24 4-4 16-88 50z" fill="#2a2b35" />
                <g fill="#2b2c30">
                    <path d="M727 287l80-52 14 6v16l-66 48-22 8-6-7z" />
                    <path d="M784 190l16-8 18 4 12 12 1 20-3 18-12 3-18-12-8-20z" />
                </g>
                <path d="M792 196l18-4 4 10-20 4zM792 212l22 6-2 10-22-6z" fill="#46484c" stroke="#17171a" stroke-width=".8" />
                <path d="M802 206l14 3-2 5-13-4z" fill="#fbf8fe" />
                <use href="#link" x="752" y="295" />
                <use href="#link" x="765" y="287" />
                <use href="#link" x="779" y="278" />
                <use href="#link" x="792" y="269" />
                <use href="#link" x="805" y="262" />
                <path d="M801 237l11 3-4 5-11-3zM791 248l14 3-6 5-12-3zM780 258l8 2-3 5-8-2zM765 267l7 2-4 4-6-2zM736 286l10 2-5 6-9-3z" fill="#fbf8fe" />
                <path d="M730 300l14-4 3 8-11 9-6-3z" fill="#2b2c30" stroke="#111114" stroke-width=".8" />
                <path d="M709 285l91-62 24 4-99 63z" fill="#2d2e39" stroke="#121218" stroke-width=".8" />
                <!-- upper run -->
                <path d="M617 272l5-6 18-9 14-10 118-70 18-3 25 8 15 15-2 8-28 2-120 72-13 5-2-9-20-2z" fill="#2b2c30" />
                <use href="#rung" x="799" y="187" />
                <use href="#rung" x="786" y="193" />
                <use href="#rung" x="773" y="201" />
                <use href="#rung" x="759" y="210" />
                <use href="#rung" x="746" y="218" />
                <use href="#rung" x="732" y="226" />
                <use href="#rung" x="718" y="235" />
                <use href="#rung" x="704" y="243" />
                <use href="#rung" x="690" y="251" />
                <use href="#rung" x="676" y="260" />
                <use href="#link" x="678" y="268" />
                <use href="#link" x="693" y="259" />
                <use href="#link" x="707" y="252" />
                <use href="#link" x="721" y="244" />
                <use href="#link" x="735" y="235" />
                <use href="#link" x="748" y="227" />
                <use href="#link" x="762" y="218" />
                <use href="#link" x="776" y="210" />
                <use href="#link" x="789" y="202" />
                <use href="#link" x="802" y="194" />
                <use href="#link" x="815" y="193" />
                <use href="#link" x="824" y="204" />
                <use href="#link" x="825" y="225" />
                <path d="M669 260l5-1 2 3-5 1zM683 252l5-1 1 3-5 1zM697 244l5-1 1 3-5 1zM710 236l5-1 1 3-5 1zM724 227l5-1 1 3-5 1zM737 219l5-1 1 3-5 1zM751 210l5-1 1 3-5 1zM764 202l5-1 1 3-5 1z" fill="#f3f0f7" />
                <path d="M617 271l5-4 17-6 31 8 3 16-6 1-8-4-8 3-5-8-20-1-9-1z" fill="#303139" stroke="#111114" />
                <path d="M620 269l42 8 9-7M646 277v7" fill="none" stroke="#111114" />
                <!-- back belt -->
                <path d="M743 317l66-44 8 4-2 10-52 34z" fill="#2d2e39" stroke="#15151a" stroke-width=".8" />

                <!-- right rail end behind the bracket -->
                <path d="M757 346l46-22 5 3v12l-33 20z" fill="#e8e6ee" stroke="#33323a" stroke-width=".8" />
                <path d="M763 349l45-21M768 353l40-20" stroke="#33323a" stroke-width=".8" />

                <!-- motor bracket -->
                <g stroke="#28272f" stroke-width="1" stroke-linejoin="round">
                    <path d="M866 216l8 2 35 84-7 6-36-10z" fill="#a3a3b5" />
                    <path d="M869 215l5 2 35 85v6l-7-2-34-82z" fill="#73727e" />
                    <path d="M810 247l52-34 11 4-4 14-51 22 3 75-10-2z" fill="#6b6a75" />
                    <path d="M810 247l8 5 3 71 36 15v6l-47-15z" fill="#7f7d89" />
                    <path d="M818 252l47-25v73l-45 23z" fill="#d9d6df" />
                    <path d="M820 323l45-23 38 8-46 30z" fill="#d3d0da" />
                    <path d="M857 338l46-30 6-6v8l-52 34z" fill="#686771" />
                    <ellipse cx="841" cy="265" rx="9.500" ry="17" fill="#f8f5fc" />
                    <path d="M836 280q-3-16 9-31" fill="none" />
                    <ellipse cx="840" cy="243" rx="2" ry="3" fill="#a5a3ae" />
                    <ellipse cx="854" cy="257" rx="2" ry="3" fill="#a5a3ae" />
                    <ellipse cx="827" cy="274" rx="2" ry="3" fill="#a5a3ae" />
                    <ellipse cx="841" cy="287" rx="2" ry="3" fill="#a5a3ae" />
                    <ellipse cx="814" cy="287" rx="1.500" ry="2" fill="#a5a3ae" />
                    <ellipse cx="832" cy="328" rx="3.500" ry="2" fill="#86848f" />
                    <ellipse cx="852" cy="333" rx="3.500" ry="2" fill="#86848f" />
                    <ellipse cx="871" cy="304" rx="3.500" ry="2" fill="#86848f" />
                    <ellipse cx="891" cy="309" rx="3.500" ry="2" fill="#86848f" />
                </g>

                <!-- yellow beam -->
                <g stroke-linejoin="round">
                    <path d="M605 212l6-5 9 4v10l-6 3z" fill="#85838d" stroke="#33323a" />
                    <path d="M611 202l17 6 12 9v14l-13-2-12-5 3-4v-8l-7-4z" fill="#0b7d12" stroke="#063f0a" />
                    <path d="M322 382l277-171 17 4v18L348 399l-9-5-17-4z" fill="#fff000" stroke="#55520a" />
                    <path d="M339 387l277-172v18L348 399l-9-2z" fill="#fbe90e" stroke="none" />
                    <path d="M322 384l17 3v8" fill="none" stroke="#55520a" stroke-width=".8" />
                    <path d="M339 387L616 216" stroke="#33b428" stroke-width="3" />
                    <path d="M310 388l22 3 15 10v12l-14 2-23-5z" fill="#0b7d12" stroke="#063f0a" />
                    <path d="M320 390l6-3 8 2v3z" fill="#83818b" />
                    <path d="M313 400h3M317 401h3" stroke="#042a06" stroke-width="2" />
                    <ellipse cx="355" cy="386" rx="1.200" ry="2" fill="#c9b90c" stroke="#55520a" stroke-width=".8" />
                    <ellipse cx="599" cy="234" rx="1.200" ry="2" fill="#c9b90c" stroke="#55520a" stroke-width=".8" />
                    <ellipse cx="614" cy="225" rx="1.500" ry="2" fill="#6f6a10" />
                </g>
                <g stroke="#28272f" stroke-linejoin="round">
                    <path d="M456 326l75-45v23l-62 42-13 2z" fill="#5d5c68" />
                    <path d="M439 323l74-46 18 4-75 45z" fill="#51505c" />
                    <path d="M439 323l17 3v22l-17-4z" fill="#666571" />
                    <path d="M439 323L515 276" stroke="#2ca53a" stroke-width="2.500" />
                    <ellipse cx="478" cy="324" rx="2" ry="3" fill="#4c4b56" />
                    <ellipse cx="493" cy="311" rx="1.500" ry="2" fill="#4c4b56" />
                    <ellipse cx="509" cy="305" rx="2.500" ry="3.500" fill="#4c4b56" />
                </g>
                <path d="M524 287l66 16-16 16-52-14q-4-10 2-18z" fill="url(#rod)" />
                <path d="M461 325l62 15-3 18-60-16q-5-9 1-17z" fill="url(#rod)" />

                <!-- slide block -->
                <g stroke="#2a1f08" stroke-width="1" stroke-linejoin="round">
                    <path d="M531 381l142 36-8 7-30-2-104-28z" fill="#565560" />
                    <path d="M678 418l96-58v-14l-90 50z" fill="#cfcdd8" stroke="#5c5a66" />
                    <path d="M521 347l97-60 48 12 31 20 74 8-97 59-46-11-30-12z" fill="#a97a1d" />
                    <path d="M521 347l107 23v5l46 11v31l-153-39z" fill="#b88319" />
                    <path d="M674 386l97-59v24l-97 66z" fill="#b78217" />
                    <ellipse cx="756" cy="354" rx="9" ry="12" fill="#3b2413" />
                    <ellipse cx="694" cy="391" rx="10" ry="13" fill="#3b2413" />
                </g>

                <!-- rails right of the block -->
                <g stroke="#25242c" stroke-width=".8" stroke-linejoin="round">
                    <path d="M756 387l6-4 88 22v12l-94-22z" fill="#44434e" />
                    <path d="M756 387l6-4 88 22-6 4z" fill="#eceaf3" />
                    <path d="M758 391l92 22" stroke="#9d9ba8" />
                    <path d="M685 431l8-5 134 34v22l-142-40z" fill="#3d3c46" />
                    <path d="M685 431l8-5 134 34-4 6z" fill="#eceaf3" />
                    <path d="M686 436l137 35" stroke="#b7b5c1" />
                    <path d="M823 462l10 1 3 15-11 1z" fill="#f1eff7" />
                </g>
                <path d="M751 345l142 36-34 14-110-29q-6-10 2-21z" fill="url(#rod)" />
                <path d="M690 383l140 34-2 25-139-38q-6-10 1-21z" fill="url(#rod)" />

                <!-- clamps and belts -->
                <g stroke="#28272f" stroke-width=".9" stroke-linejoin="round">
                    <path d="M667 312l30 8 28-16v10l-28 18-30-10z" fill="#c18e22" />
                    <path d="M667 303l30 8 28-17v11l-28 18-30-9z" fill="#eae7ef" />
                    <path d="M667 295l30 9 28-17v8l-28 17-30-9z" fill="#8e8c99" />
                    <path d="M667 295l29-16 29 8-28 17z" fill="#73727d" />
                    <path d="M697 312l28-17" stroke-dasharray="1.500 1.500" stroke-width="2" />
                    <path d="M642 325l31-21 17 4-33 24z" fill="#2d2e39" />
                    <path d="M628 362l29-17v12l-29 18z" fill="#bd891f" />
                    <path d="M600 347l28 8 29-17v10l-29 17-24-6z" fill="#eae7ef" />
                    <path d="M598 339l30 8 29-18v9l-29 17-30-8z" fill="#8e8c99" />
                    <path d="M598 339l30-17 29 7-29 18z" fill="#73727d" />
                    <path d="M628 355l29-17" stroke-dasharray="1.500 1.500" stroke-width="2" />
                    <path d="M510 405l93-58 17 3-92 61z" fill="#2d2e39" />
                    <path d="M556 430l46-28 18 2-60 35z" fill="#2d2e39" />
                </g>

                <!-- pulley -->
                <path d="M476 441l12-4 8 20-8 8-12-6z" fill="#eeebf4" stroke="#33323a" />
                <ellipse cx="498" cy="437" rx="15" ry="30" fill="#f3f1f8" stroke="#28272f" />
                <ellipse cx="519" cy="432" rx="20" ry="24" fill="#dddae5" stroke="#4e4d57" />
                <path d="M491 435q2-26 19-30h18q-17 8-20 32l-4 28q-12-3-13-30z" fill="#353640" stroke="#15151a" />

                <!-- tension bracket -->
                <g stroke="#25242c" stroke-width=".9" stroke-linejoin="round">
                    <path d="M542 493l20-12 45 10v8l-48 30z" fill="#75737f" />
                    <path d="M607 491v8l-52 31v-8z" fill="#55545f" />
                    <path d="M502 438l57-34v77l-18 14 14 36-53-13z" fill="#797783" />
                    <path d="M505 437l6-1 48 84-4 6z" fill="#a9a7b2" />
                    <path d="M502 438l3-1 50 89v6l-53-14z" fill="#7e7c87" />
                    <path d="M524 452q0-8 22-20 10-3 9 6l-27 21z" fill="#5f5e69" />
                    <path d="M528 452l20-14" fill="none" />
                    <path d="M540 442l6-3 6 3v9l-6 3-6-3z" fill="#c7d6de" />
                    <path d="M543 443l4-1 2 6-4 3z" fill="#7f8f9b" />
                    <path d="M551 445l6 1v7l-6 0z" fill="#2e2d36" />
                    <ellipse cx="568" cy="489" rx="3.500" ry="2" fill="#5c5b66" />
                    <ellipse cx="594" cy="496" rx="3.500" ry="2" fill="#5c5b66" />
                    <ellipse cx="560" cy="517" rx="3" ry="2" fill="#5c5b66" />
                </g>

                <!-- right gripper carriage -->
                <g stroke="#25242c" stroke-width=".9" stroke-linejoin="round">
                    <path d="M845 420l78-46v24l-78 55z" fill="#b5b3be" />
                    <path d="M855 416l67-38v22l-67 42z" fill="#8b3a0c" />
                    <path d="M855 416l8 2v26l-8-2z" fill="#a34c14" />
                    <path d="M876 414l34-22 17 4-32 22v20l-19-4z" fill="#c3c1cc" />
                    <path d="M876 414l34-22 17 4-32 22z" fill="#94929d" />
                    <path d="M881 430v-10l8 2v10" fill="none" />
                    <ellipse cx="850" cy="434" rx="3" ry="8" fill="#e9e6ef" />
                    <path d="M832 418l81-49 11 4v4l-79 43z" fill="#5e5d68" />
                    <path d="M827 422l5-4 13 2v28l-10 9-8-10z" fill="#6f6e7a" />
                    <path d="M966 452l9-12 33-9v16l-18 13z" fill="#d5d3dd" />
                    <path d="M995 446l6-3 71 20v11l-10 6-68-19z" fill="#3e3d47" />
                    <path d="M995 446l6-3 71 20-9 5z" fill="#f3f1f8" />
                    <path d="M1063 468l9-5v11l-10 6z" fill="#5b5a65" />
                    <path d="M975 440l22-12 11 3-20 12z" fill="#a8a6b2" />
                    <path d="M988 443l20-12v12l-9 0-8 16-3 0z" fill="#85838f" />
                    <path d="M907 485l20-13 10 5v14l-20 12-24-7z" fill="#c9c7d2" />
                    <path d="M835 459l148-94 11 3v26l15 4 4 10v14l-48 31v24l-26 14-2-24-49 31-33 1-19-6-1-20z" fill="#5d5c68" />
                    <path d="M843 487l152-94 14 4 4 10-125 80-33 4z" fill="#62616c" />
                    <path d="M835 459l148-94 11 3-149 93z" fill="#53525d" />
                    <path d="M835 459l8 2v26l-9-4zM834 483l21 7v10l-21-6zM855 490l33-3v11l-33 2z" fill="#4e4d58" />
                    <path d="M843 461v26M888 487l125-79M965 452v25" fill="none" />
                    <ellipse cx="935" cy="444" rx="8" ry="3" fill="#53525d" />
                    <path d="M905 486l22-14 10 4-20 13z" fill="#a8a6b2" />
                    <path d="M893 497l13-10 12 4-1 13z" fill="#dcdae4" />
                    <path d="M917 489l20-13v15l-8 1-8 12-4 0z" fill="#86848f" />
                    <path d="M923 492l7-3 70 19v12l-8 4-69-18z" fill="#3e3d47" />
                    <path d="M923 492l7-3 70 19-9 4z" fill="#f3f1f8" />
                    <path d="M991 512l9-4v12l-8 4z" fill="#5b5a65" />
                    <path d="M925 498l66 18M998 453l64 18" stroke="#8b8996" />
                </g>

                <!-- drag handle and pointer -->
                <path d="M554 247l6 6-6 6-6-6z" fill="#0b3d12" />
                <path d="M554 251v14l3-3 3 5 2-1-2-5h4z" fill="#fff" stroke="#44424c" stroke-width=".8" />
            </svg>

            <div class="viewbar">
                <button aria-label="Neu einpassen"><svg class="ico"><use href="#i-zfit" /></svg></button>
                <button aria-label="Vergrößern"><svg class="ico"><use href="#i-zin" /></svg></button>
                <button aria-label="Verkleinern"><svg class="ico"><use href="#i-zout" /></svg></button>
                <button aria-label="Bildaufbau"><svg class="ico"><use href="#i-shade" /></svg></button>
                <button aria-label="Darstellungsstil"><svg class="ico"><use href="#i-cube" /></svg></button>
                <button aria-label="Gespeicherte Orientierungen"><svg class="ico"><use href="#i-views" /></svg></button>
                <button aria-label="Ansichtsmanager"><svg class="ico"><use href="#i-cam" /></svg></button>
                <button aria-label="Drehmitte"><svg class="ico"><use href="#i-spin" /></svg></button>
                <button aria-label="Ebenen anzeigen"><svg class="ico"><use href="#i-pdisp" /></svg></button>
                <button aria-label="Achsen anzeigen"><svg class="ico"><use href="#i-adisp" /></svg></button>
                <button aria-label="Punkte anzeigen"><svg class="ico"><use href="#i-ptdisp" /></svg></button>
                <button aria-label="Koordinatensysteme anzeigen"><svg class="ico"><use href="#i-cdisp" /></svg></button>
                <button aria-label="Anmerkungen anzeigen"><svg class="ico"><use href="#i-ann" /></svg></button>
                <button aria-label="Drehzentrum"><svg class="ico"><use href="#i-rgb" /></svg></button>
            </div>

            <div class="dialog">
                <h2>Ziehen</h2>
                <div class="dialog-tools">
                    <button aria-label="Punkt ziehen"><svg class="ico"><use href="#i-hand" /></svg></button>
                    <button aria-label="Körper ziehen"><svg class="ico"><use href="#i-hand2" /></svg></button>
                </div>
                <button class="snap">Schnappschüsse</button>
                <button class="close">Schließen</button>
            </div>
        </section>
    </main>

    <footer class="status">
        <button class="st-tool pressed" aria-label="Modellbaum ein/aus"><svg class="ico"><use href="#i-mtree" /></svg></button>
        <button class="st-tool" aria-label="Browser ein/aus"><svg class="ico"><use href="#i-globe" /></svg></button>
        <p class="message"><span>• Linke Maus = Positionen akzeptieren;</span><br>mittlere Maus = Ziehen abbrechen;</p>
        <svg class="st-dots"><use href="#i-dots" /></svg>
        <svg class="ico st-flag"><use href="#i-flag" /></svg>
        <button class="st-btn" aria-label="Suchen"><svg class="ico"><use href="#i-bino" /></svg></button>
        <button class="st-btn" aria-label="Auswahl"><svg class="ico"><use href="#i-sel" /></svg></button>
        <select class="filter" aria-label="Auswahlfilter">
            <option>Smart</option>
        </select>
    </footer>
</body>

</html>
```
FILE: styles.css
```
* {
    box-sizing: border-box;
}

body {
    margin: 0;
    height: 100vh;
    display: flex;
    flex-direction: column;
    overflow: hidden;
    background: #fdf9fe;
    color: #47454f;
    font-family: "DejaVu Sans Condensed", "DejaVu Sans", sans-serif;
    font-size: 9px;
    font-weight: bold;
    line-height: 12px;
}

h1, h2, p, ul {
    margin: 0;
    padding: 0;
    font-size: inherit;
}

button {
    display: flex;
    align-items: center;
    margin: 0;
    padding: 0;
    border: none;
    background: none;
    color: inherit;
    font: inherit;
    cursor: pointer;
}

svg {
    display: block;
    flex: none;
}

.defs {
    position: absolute;
    width: 0;
    height: 0;
}

.ico {
    width: 15px;
    height: 15px;
}

.caret {
    flex: none;
    display: inline-block;
    width: 0;
    height: 0;
    border: 2px solid transparent;
    border-top: 3px solid #9c99a4;
    border-bottom: none;
}

.caret.dark {
    border: 3px solid transparent;
    border-top: 4px solid #3f3d47;
    border-bottom: none;
}

.vsep {
    width: 1px;
    height: 18px;
    background: #dcd9e3;
}

/* title bar */
.titlebar {
    display: flex;
    align-items: center;
    gap: 2px;
    height: 24px;
    padding: 0 6px;
    border-top: 1px solid #a9a6b0;
}

.titlebar .vsep {
    margin: 0 2px;
}

.qat {
    gap: 5px;
}

.qat-space {
    width: 14px;
}

.title {
    margin-left: 3px;
    color: #2b2932;
    font-family: "Liberation Sans", Arial, sans-serif;
    font-size: 11px;
    font-weight: normal;
    text-shadow: 0 0 1px #6b6974;
    white-space: nowrap;
}

/* ribbon tabs */
.tabs {
    display: flex;
    align-items: flex-end;
    height: 21px;
    padding-left: 3px;
    border-bottom: 1px solid #d2cfd9;
    font-size: 10px;
}

.tab {
    height: 18px;
    padding: 0 9px;
    border-top: 1px solid #d2cfd9;
    background: #f3f0f8;
    color: #7b7984;
    line-height: 17px;
    text-decoration: none;
    white-space: nowrap;
}

.tab.file {
    gap: 3px;
    margin-right: 6px;
    padding: 0 4px;
    border: 1px solid #d2cfd9;
    border-bottom: none;
}

.tab.active {
    height: 21px;
    margin-bottom: -1px;
    padding: 0 7px;
    border: 1px solid #d2cfd9;
    border-bottom: none;
    border-radius: 2px 2px 0 0;
    background: #fdf9fe;
    color: #3f3d47;
    line-height: 22px;
}

.tab.split {
    border-left: 1px solid #d2cfd9;
}

.tab.last {
    border-right: 1px solid #d2cfd9;
}

.collapse {
    align-self: center;
    margin-left: auto;
}

.up {
    width: 10px;
    height: 8px;
}

/* ribbon */
.ribbon {
    display: flex;
    height: 76px;
    padding-left: 3px;
    border-bottom: 1px solid #cbc8d2;
}

.group {
    display: flex;
    flex-direction: column;
    border-right: 1px solid #e2dfe8;
}

.g-op { width: 98px; }
.g-get { width: 82px; }
.g-comp { width: 175px; }
.g-datum { width: 128px; }
.g-cut { width: 99px; }
.g-disp { width: 163px; }
.g-mod { width: 77px; }
.g-int { width: 111px; }
.g-inv { width: 73px; }
.g-proj { width: 42px; }

.rest {
    flex: 1;
}

.tools {
    flex: 1;
    display: flex;
    justify-content: center;
    gap: 5px;
    padding-top: 4px;
    white-space: nowrap;
}

.name {
    justify-content: center;
    gap: 3px;
    width: 100%;
    height: 17px;
    border-top: 1px solid #e2dfe8;
    background: #f3f0f8;
    white-space: nowrap;
}

.big {
    flex-direction: column;
    justify-content: flex-start;
    color: #aaa7b2;
    line-height: 11px;
}

.big svg {
    width: 22px;
    height: 22px;
    margin-bottom: 6px;
}

.big .caret {
    margin-top: 4px;
}

.big span .caret {
    margin: 0 0 2px 3px;
}

.lined {
    padding-left: 6px;
    border-left: 1px solid #e9e6ee;
}

.stack {
    display: flex;
    flex-direction: column;
    gap: 7px;
}

.small {
    gap: 3px;
    height: 12px;
    color: #a5a2ad;
}

.small svg {
    width: 12px;
    height: 12px;
}

.on {
    color: #47454f;
}

/* work area */
.work {
    flex: 1;
    display: flex;
    min-height: 0;
}

.side {
    display: flex;
    flex-direction: column;
    width: 220px;
    padding: 10px 2px 7px 3px;
}

.side-tabs {
    display: flex;
}

.side-tab {
    justify-content: center;
    width: 21px;
    height: 20px;
    border: 1px solid #dcd9e3;
    border-left: none;
    background: #f3f0f8;
}

.side-tab.open {
    border: none;
    background: none;
}

.panel {
    flex: 1;
    border: 1px solid #cbc8d2;
    border-right-width: 2px;
    border-bottom-width: 2px;
}

.panel-head {
    display: flex;
    align-items: center;
    gap: 6px;
    height: 20px;
    padding: 0 2px 0 13px;
}

.panel-head h2 {
    flex: 1;
}

.panel-head button {
    gap: 6px;
}

.search {
    display: flex;
    align-items: center;
    gap: 4px;
    height: 20px;
    padding: 0 2px 3px 2px;
    border-bottom: 1px solid #cbc8d2;
}

.field {
    flex: 1;
    display: flex;
    min-width: 0;
    height: 16px;
    border: 1px solid #cbc8d2;
    background: #fff;
}

.field input {
    flex: 1;
    min-width: 0;
    border: none;
    background: none;
    font: inherit;
    outline: none;
}

.field button {
    padding: 0 4px;
    color: #77747f;
}

.tree {
    padding-top: 4px;
    list-style: none;
}

.tree li {
    display: flex;
    align-items: center;
    height: 14px;
    padding-left: 10px;
    white-space: nowrap;
}

.tree svg {
    width: 11px;
    height: 11px;
    margin-right: 2px;
}

.tree .root {
    padding-left: 7px;
}

.tree .deep {
    padding-left: 24px;
}

.tw {
    width: 11px;
}

.tw.closed::before,
.tw.opened::before {
    content: "";
    display: block;
    width: 0;
    height: 0;
    border: 3px solid transparent;
}

.tw.closed::before {
    border-left: 5px solid #9c99a4;
    border-right: none;
}

.tw.opened::before {
    border-top: 5px solid #8f8c98;
    border-bottom: none;
}

.mark {
    width: 3px;
    height: 5px;
    margin: 0 1px 3px 1px;
    border: 1px solid #77747f;
}

.mark.flex {
    border-radius: 2px;
}

/* graphics window */
.view {
    position: relative;
    flex: 1;
    min-width: 0;
    overflow: hidden;
}

.scene {
    width: 100%;
    height: 100%;
}

.viewbar {
    position: absolute;
    top: 5px;
    left: 404px;
    display: flex;
    border: 1px solid #e2dfe8;
    border-width: 1px 4px 1px 2px;
}

.viewbar button {
    justify-content: center;
    width: 22px;
    height: 21px;
    border-right: 1px solid #e2dfe8;
    background: #fefcff;
}

.dialog {
    position: absolute;
    top: 1px;
    right: -64px;
    width: 237px;
    height: 79px;
    padding: 0 4px;
    border: 2px solid #bbb8c2;
    background: #f3f0f8;
}

.dialog h2 {
    height: 15px;
    margin: 0 -4px;
    background: #fdf9fe;
    color: #b5b2bd;
    font-style: italic;
    line-height: 15px;
    text-align: center;
}

.dialog-tools {
    display: flex;
    gap: 4px;
    height: 22px;
    align-items: center;
}

.snap {
    gap: 4px;
    width: 100%;
    height: 11px;
    padding-left: 4px;
    background: #00007d;
    color: #fff;
}

.snap::before {
    content: "";
    border: 4px solid transparent;
    border-left: 5px solid #fff;
    border-right: none;
}

.close {
    justify-content: center;
    width: 57px;
    height: 17px;
    margin: 8px auto 0;
    border-radius: 2px;
    background: linear-gradient(#b7e0fd, #8fcaf9);
}

/* status bar */
.status {
    display: flex;
    align-items: center;
    height: 33px;
    padding: 6px 0 0 4px;
    border-top: 2px solid #a9a6b0;
    background: #f3f0f8;
}

.st-tool {
    justify-content: center;
    width: 16px;
    height: 16px;
    margin: 6px 3px 0 0;
    border: 1px solid #dcd9e3;
}

.st-tool.pressed {
    border-color: #b5b2bd;
}

.st-tool svg {
    width: 12px;
    height: 12px;
}

.message {
    flex: 1;
    padding-left: 5px;
    font-weight: normal;
    line-height: 11px;
}

.message span {
    padding-left: 2px;
}

.st-dots {
    width: 20px;
    height: 14px;
}

.st-flag {
    width: 12px;
    height: 12px;
    margin: 0 18px 0 4px;
}

.st-btn {
    justify-content: center;
    width: 28px;
    height: 20px;
    margin-right: 5px;
    border: 1px solid #cbc8d2;
    border-radius: 2px;
    background: #faf7fc;
}

.filter {
    width: 110px;
    height: 17px;
    margin: 0 -20px 0 62px;
    padding-left: 4px;
    border: 1px solid #cbc8d2;
    background: #fdf9fe;
    color: inherit;
    font: inherit;
    appearance: none;
}
```
